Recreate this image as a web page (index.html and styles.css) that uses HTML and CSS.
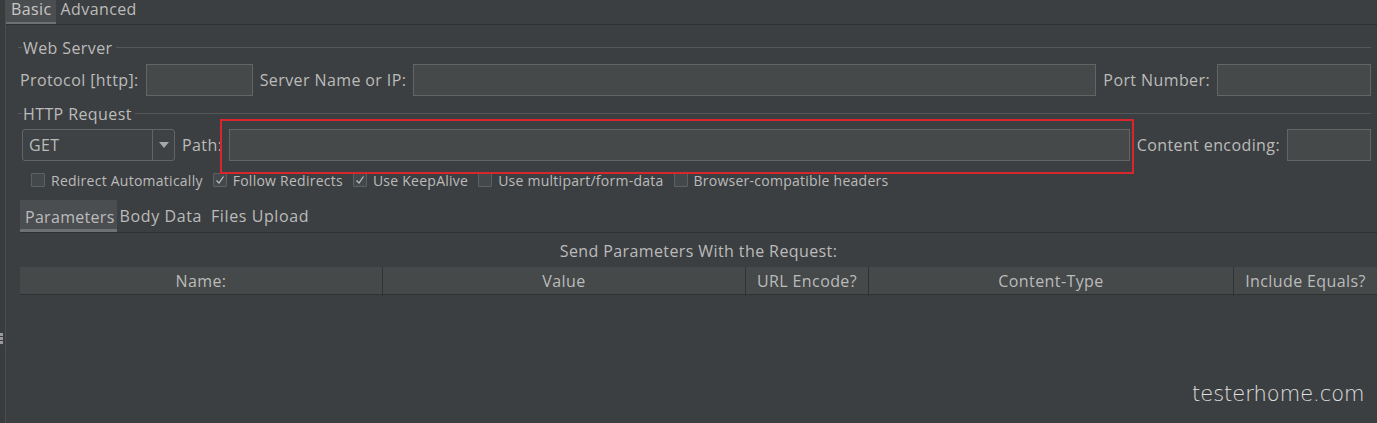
FILE: index.html
```html
<!DOCTYPE html>
<html>
<head>
<meta charset="utf-8">
<link rel="stylesheet" href="styles.css">
</head>
<body>
<div class="app">
  <div class="gutter"><div class="handle"></div></div>
  <div class="main">
    <div class="tabs">
      <div class="tab selected">Basic</div>
      <div class="tab">Advanced</div>
    </div>
    <div class="panel">
      <div class="group-title"><span class="gt-line short"></span><span class="gt-text">Web Server</span><span class="gt-line"></span></div>
      <div class="row row1">
        <span class="lbl">Protocol [http]:</span>
        <div class="input w-proto"></div>
        <span class="lbl">Server Name or IP:</span>
        <div class="input grow"></div>
        <span class="lbl">Port Number:</span>
        <div class="input w-port"></div>
      </div>
      <div class="group-title g2"><span class="gt-line short"></span><span class="gt-text">HTTP Request</span><span class="gt-line"></span></div>
      <div class="row row2">
        <div class="combo">
          <span class="combo-text">GET</span>
          <span class="combo-btn"><svg width="10" height="6" viewBox="0 0 10 6"><path d="M0 0 H10 L5 6 Z" fill="#a8a8a8"/></svg></span>
        </div>
        <span class="lbl">Path:</span>
        <div class="input grow"></div>
        <span class="lbl">Content encoding:</span>
        <div class="input w-enc"></div>
      </div>
      <div class="checks">
        <label class="chk"><span class="box"></span>Redirect Automatically</label>
        <label class="chk"><span class="box"><svg width="12" height="12" viewBox="0 0 12 12"><path d="M2.5 6.5 L5 9 L9.5 2.5" fill="none" stroke="#bbbbbb" stroke-width="1.3"/></svg></span>Follow Redirects</label>
        <label class="chk"><span class="box"><svg width="12" height="12" viewBox="0 0 12 12"><path d="M2.5 6.5 L5 9 L9.5 2.5" fill="none" stroke="#bbbbbb" stroke-width="1.3"/></svg></span>Use KeepAlive</label>
        <label class="chk"><span class="box"></span>Use multipart/form-data</label>
        <label class="chk"><span class="box"></span>Browser-compatible headers</label>
      </div>
      <div class="subtabs">
        <div class="stab selected">Parameters</div>
        <div class="stab">Body Data</div>
        <div class="stab">Files Upload</div>
      </div>
      <div class="send">Send Parameters With the Request:</div>
      <div class="thead">
        <div class="th">Name:</div>
        <div class="th">Value</div>
        <div class="th">URL Encode?</div>
        <div class="th">Content-Type</div>
        <div class="th last">Include Equals?</div>
      </div>
    </div>
  </div>
</div>
<div class="highlight"></div>
<div class="watermark">testerhome.com</div>
</body>
</html>
```
FILE: styles.css
```css
html, body {
  margin: 0;
  padding: 0;
}
body {
  width: 1377px;
  height: 423px;
  overflow: hidden;
  background: #3c3f41;
  color: #bbbbbb;
  font-family: "Open Sans", "Noto Sans", sans-serif;
  font-size: 16px;
  letter-spacing: 0.4px;
  position: relative;
}
.app {
  display: flex;
  height: 423px;
}
.gutter {
  width: 5px;
  background: #393b3d;
  border-right: 1px solid #4a4d4f;
  position: relative;
}
.handle {
  position: absolute;
  left: 0;
  top: 333px;
  width: 3px;
  height: 12px;
  background: repeating-linear-gradient(#9a9a9a 0 3px, #3c3f41 3px 4px);
}
.main {
  flex: 1;
  display: flex;
  flex-direction: column;
}
.tabs {
  display: flex;
  height: 24px;
  border-bottom: 1px solid #2f3133;
}
.tab {
  padding: 0 4px 0 5px;
  line-height: 18px;
  height: 22px;
  color: #bbbbbb;
}
.tab.selected {
  background: #4b4e50;
  border-bottom: 2px solid #6e7173;
  color: #c8c8c8;
}
.panel {
  padding: 0 6px 0 12px;
  display: flex;
  flex-direction: column;
}
.group-title {
  display: flex;
  align-items: center;
  height: 24px;
  margin-top: 11px;
}
.group-title.g2 {
  margin-top: 6px;
}
.gt-text {
  padding: 0 3px 0 1px;
  line-height: 22px;
  color: #bbbbbb;
}
.gt-line {
  flex: 1;
  height: 1px;
  background: #55585a;
  margin-top: -1px;
}
.gt-line.short {
  flex: 0 0 4px;
}
.row {
  display: flex;
  align-items: center;
  gap: 7px;
  height: 32px;
  margin-top: 4px;
}
.row1 {
  padding-left: 2px;
}
.row2 {
  padding-left: 4px;
  margin-top: 3px;
}
.lbl {
  white-space: nowrap;
  color: #bbbbbb;
}
.input {
  height: 30px;
  background: #45494a;
  border: 1px solid #646464;
  box-sizing: content-box;
}
.grow {
  flex: 1;
}
.w-proto { width: 105px; }
.w-port { width: 152px; }
.w-enc { width: 82px; }
.combo {
  width: 151px;
  height: 30px;
  border: 1px solid #646464;
  border-radius: 3px;
  background: #3f4244;
  display: flex;
  align-items: center;
}
.combo-text {
  flex: 1;
  padding-left: 6px;
}
.combo-btn {
  width: 21px;
  height: 30px;
  border-left: 1px solid #646464;
  display: flex;
  align-items: center;
  justify-content: center;
}
.checks {
  display: flex;
  align-items: center;
  height: 20px;
  margin-top: 9px;
  padding-left: 13px;
  gap: 10px;
  font-size: 14px;
  letter-spacing: 0.25px;
}
.chk {
  display: flex;
  align-items: center;
  gap: 6px;
  white-space: nowrap;
  color: #bbbbbb;
}
.box {
  width: 12px;
  height: 12px;
  border: 1px solid #5e6163;
  background: #43494a;
  display: flex;
  align-items: center;
  justify-content: center;
  border-radius: 1px;
}
.subtabs {
  display: flex;
  margin-top: 8px;
  margin-left: 2px;
  height: 34px;
  border-bottom: 1px solid #2f3133;
  margin-right: -6px;
}
.stab {
  padding: 0 6px 0 3px;
  line-height: 36px;
  height: 34px;
  letter-spacing: 0.6px;
}
.stab.selected {
  background: #4b4e50;
  border-bottom: 3px solid #6e7173;
  height: 29px;
  line-height: 34px;
  margin-top: 2px;
  padding: 0 2px 0 5px;
  letter-spacing: 0.3px;
}
.send {
  text-align: center;
  height: 34px;
  line-height: 36px;
  padding-left: 2px;
  margin-right: -6px;
}
.thead {
  display: grid;
  grid-template-columns: 363px 363px 123px 365px 143px;
  margin-left: 2px;
  margin-right: -6px;
  height: 27px;
  background: #45494a;
  border-bottom: 1px solid #2f3133;
}
.th {
  text-align: center;
  line-height: 29px;
  border-right: 1px solid #2f3133;
  white-space: nowrap;
}
.th.last {
  border-right: none;
}
.highlight {
  position: absolute;
  left: 220px;
  top: 119px;
  width: 910px;
  height: 51px;
  border: 2px solid #d9262c;
}
.watermark {
  position: absolute;
  left: 1192px;
  top: 382px;
  font-family: "DejaVu Sans", sans-serif;
  font-weight: 200;
  font-size: 21px;
  letter-spacing: 0;
  color: #e0e0e0;
}
```
